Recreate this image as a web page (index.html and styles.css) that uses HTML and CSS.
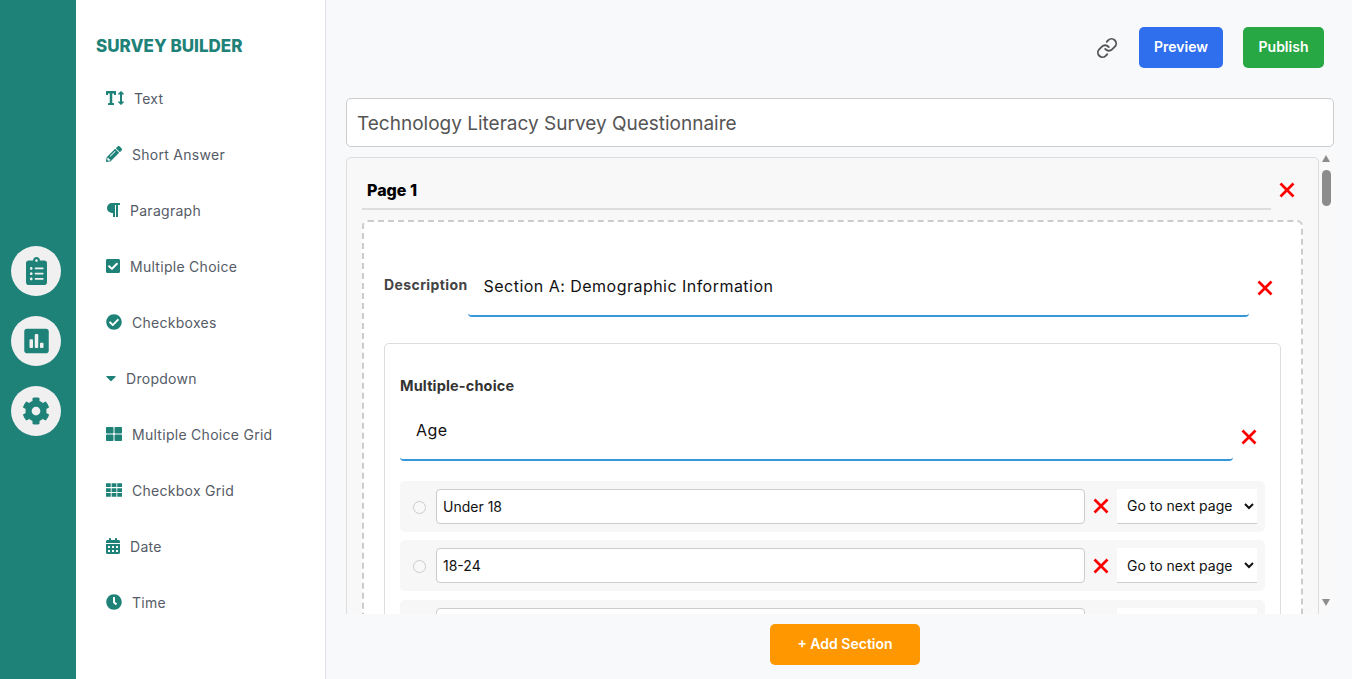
FILE: index.html
```html
<!DOCTYPE html>
<html lang="en">
<head>
<meta charset="utf-8">
<title>Survey Builder</title>
<link rel="stylesheet" href="styles.css">
</head>
<body>
<svg class="defs" width="0" height="0" aria-hidden="true"><symbol id="x" viewBox="0 0 16 16"><path d="M1.5 1.5l13 13M14.500 1.500l-13 13" fill="none" stroke="#f00" stroke-width="2.700"/></symbol></svg>
<nav class="rail">
  <a class="rail-btn"><svg width="21" height="28" viewBox="0 0 384 512"><path d="M336 64h-80c0-35.300-28.700-64-64-64s-64 28.700-64 64H48C21.500 64 0 85.500 0 112v352c0 26.500 21.500 48 48 48h288c26.500 0 48-21.500 48-48V112c0-26.500-21.500-48-48-48zM96 424c-13.300 0-24-10.700-24-24s10.700-24 24-24 24 10.700 24 24-10.700 24-24 24zm0-96c-13.300 0-24-10.700-24-24s10.700-24 24-24 24 10.700 24 24-10.700 24-24 24zm0-96c-13.300 0-24-10.700-24-24s10.700-24 24-24 24 10.700 24 24-10.700 24-24 24zm96-192c13.300 0 24 10.700 24 24s-10.700 24-24 24-24-10.700-24-24 10.700-24 24-24zm128 368c0 4.400-3.600 8-8 8H168c-4.400 0-8-3.600-8-8v-16c0-4.400 3.600-8 8-8h144c4.400 0 8 3.600 8 8v16zm0-96c0 4.400-3.600 8-8 8H168c-4.400 0-8-3.600-8-8v-16c0-4.400 3.600-8 8-8h144c4.400 0 8 3.600 8 8v16zm0-96c0 4.400-3.600 8-8 8H168c-4.400 0-8-3.600-8-8v-16c0-4.400 3.600-8 8-8h144c4.400 0 8 3.600 8 8v16z"/></svg></a>
  <a class="rail-btn"><svg width="25" height="28" viewBox="0 0 448 512"><path d="M400 32H48C21.500 32 0 53.500 0 80v352c0 26.500 21.500 48 48 48h352c26.500 0 48-21.500 48-48V80c0-26.500-21.500-48-48-48zM160 368c0 8.840-7.160 16-16 16h-32c-8.840 0-16-7.160-16-16V240c0-8.840 7.160-16 16-16h32c8.840 0 16 7.160 16 16v128zm96 0c0 8.840-7.160 16-16 16h-32c-8.840 0-16-7.160-16-16V144c0-8.840 7.160-16 16-16h32c8.840 0 16 7.160 16 16v224zm96 0c0 8.840-7.160 16-16 16h-32c-8.840 0-16-7.160-16-16v-64c0-8.840 7.160-16 16-16h32c8.840 0 16 7.160 16 16v64z"/></svg></a>
  <a class="rail-btn"><svg width="28" height="28" viewBox="0 0 512 512"><path d="M487.400 315.700l-42.600-24.600c4.300-23.200 4.300-47 0-70.200l42.600-24.600c4.900-2.800 7.100-8.600 5.500-14-11.100-35.600-30-67.800-54.700-94.600-3.800-4.100-10-5.100-14.800-2.300L380.800 110c-17.900-15.400-38.500-27.300-60.800-35.100V25.800c0-5.600-3.900-10.500-9.400-11.700-36.700-8.200-74.300-7.800-109.200 0-5.500 1.200-9.400 6.100-9.400 11.700V75c-22.200 7.900-42.800 19.800-60.800 35.100L88.700 85.500c-4.900-2.800-11-1.900-14.800 2.300-24.700 26.700-43.600 58.900-54.700 94.600-1.700 5.400.6 11.200 5.500 14L67.300 221c-4.300 23.200-4.300 47 0 70.200l-42.600 24.600c-4.900 2.800-7.100 8.600-5.500 14 11.100 35.600 30 67.800 54.700 94.600 3.800 4.100 10 5.100 14.800 2.300l42.600-24.600c17.900 15.400 38.500 27.300 60.800 35.100v49.200c0 5.600 3.900 10.500 9.400 11.700 36.700 8.200 74.300 7.800 109.200 0 5.500-1.200 9.400-6.100 9.400-11.700v-49.200c22.200-7.900 42.800-19.800 60.800-35.100l42.600 24.600c4.900 2.800 11 1.900 14.800-2.300 24.700-26.700 43.600-58.900 54.700-94.600 1.500-5.500-.7-11.300-5.600-14.100zM256 336c-44.100 0-80-35.900-80-80s35.900-80 80-80 80 35.900 80 80-35.900 80-80 80z"/></svg></a>
</nav>
<aside class="tools">
  <h1 class="tools-title">SURVEY BUILDER</h1>
  <ul class="tool-list">
    <li class="tool"><svg width="18" height="16" viewBox="0 0 576 512"><path d="M304 32H16A16 16 0 0 0 0 48v96a16 16 0 0 0 16 16h32a16 16 0 0 0 16-16v-32h56v304H80a16 16 0 0 0-16 16v32a16 16 0 0 0 16 16h160a16 16 0 0 0 16-16v-32a16 16 0 0 0-16-16h-40V112h56v32a16 16 0 0 0 16 16h32a16 16 0 0 0 16-16V48a16 16 0 0 0-16-16zm256 336h-48V144h48c14.310 0 21.330-17.310 11.310-27.310l-80-80a16 16 0 0 0-22.620 0l-80 80C379.360 126 384.360 144 400 144h48v224h-48c-14.290 0-21.310 17.310-11.310 27.310l80 80a16 16 0 0 0 22.620 0l80-80C580.640 386 575.640 368 560 368z"/></svg>Text</li>
    <li class="tool"><svg width="16" height="16" viewBox="0 0 512 512"><path d="M497.900 142.100l-46.100 46.100c-4.700 4.700-12.300 4.700-17 0l-111-111c-4.700-4.700-4.700-12.300 0-17l46.100-46.100c18.700-18.700 49.100-18.700 67.900 0l60.100 60.100c18.800 18.700 18.800 49.100 0 67.900zM284.200 99.800L21.600 362.400.4 483.900c-2.900 16.400 11.400 30.600 27.800 27.800l121.500-21.300 262.600-262.600c4.700-4.700 4.700-12.300 0-17l-111-111c-4.800-4.700-12.400-4.700-17.100 0zM124.100 339.900c-5.500-5.500-5.500-14.300 0-19.800l154-154c5.500-5.500 14.300-5.500 19.800 0s5.500 14.300 0 19.800l-154 154c-5.500 5.500-14.300 5.500-19.800 0zM88 424h48v36.300l-64.500 11.300-31.100-31.100L51.700 376H88v48z"/></svg>Short Answer</li>
    <li class="tool"><svg width="14" height="16" viewBox="0 0 448 512"><path d="M448 48v32a16 16 0 0 1-16 16h-48v368a16 16 0 0 1-16 16h-32a16 16 0 0 1-16-16V96h-32v368a16 16 0 0 1-16 16h-32a16 16 0 0 1-16-16V352h-32a160 160 0 0 1 0-320h240a16 16 0 0 1 16 16z"/></svg>Paragraph</li>
    <li class="tool"><svg width="14" height="16" viewBox="0 0 448 512"><path d="M400 480H48c-26.510 0-48-21.490-48-48V80c0-26.510 21.490-48 48-48h352c26.510 0 48 21.490 48 48v352c0 26.510-21.490 48-48 48zm-204.686-98.059l184-184c6.248-6.248 6.248-16.379 0-22.627l-22.627-22.627c-6.248-6.248-16.379-6.249-22.628 0L184 302.745l-69.059-69.059c-6.248-6.248-16.379-6.248-22.628 0L69.687 256.314c-6.248 6.248-6.248 16.379 0 22.627l92.686 92.686c6.249 6.249 16.379 6.249 22.628.001z"/></svg>Multiple Choice</li>
    <li class="tool"><svg width="16" height="16" viewBox="0 0 512 512"><path d="M504 256c0 136.967-111.033 248-248 248S8 392.967 8 256 119.033 8 256 8s248 111.033 248 248zM227.314 387.314l184-184c6.248-6.248 6.248-16.379 0-22.627l-22.627-22.627c-6.248-6.249-16.379-6.249-22.628 0L216 308.118l-70.059-70.059c-6.248-6.248-16.379-6.248-22.628 0l-22.627 22.627c-6.248 6.248-6.248 16.379 0 22.627l104 104c6.249 6.249 16.379 6.249 22.628.001z"/></svg>Checkboxes</li>
    <li class="tool"><svg width="10" height="16" viewBox="0 0 320 512"><path d="M31.300 192h257.300c17.800 0 26.700 21.500 14.100 34.100L174.100 354.800c-7.800 7.800-20.500 7.800-28.300 0L17.200 226.100C4.600 213.500 13.500 192 31.300 192z"/></svg>Dropdown</li>
    <li class="tool"><svg width="16" height="16" viewBox="0 0 512 512"><path d="M296 32h192c13.255 0 24 10.745 24 24v160c0 13.255-10.745 24-24 24H296c-13.255 0-24-10.745-24-24V56c0-13.255 10.745-24 24-24zm-80 0H24C10.745 32 0 42.745 0 56v160c0 13.255 10.745 24 24 24h192c13.255 0 24-10.745 24-24V56c0-13.255-10.745-24-24-24zM0 296v160c0 13.255 10.745 24 24 24h192c13.255 0 24-10.745 24-24V296c0-13.255-10.745-24-24-24H24c-13.255 0-24 10.745-24 24zm296 184h192c13.255 0 24-10.745 24-24V296c0-13.255-10.745-24-24-24H296c-13.255 0-24 10.745-24 24v160c0 13.255 10.745 24 24 24z"/></svg>Multiple Choice Grid</li>
    <li class="tool"><svg width="16" height="16" viewBox="0 0 512 512"><path d="M0 40h152v120H0zM180 40h152v120H180zM360 40h152v120H360zM0 196h152v120H0zM180 196h152v120H180zM360 196h152v120H360zM0 352h152v120H0zM180 352h152v120H180zM360 352h152v120H360z"/></svg>Checkbox Grid</li>
    <li class="tool"><svg width="14" height="16" viewBox="0 0 448 512"><path d="M0 464c0 26.500 21.500 48 48 48h352c26.500 0 48-21.500 48-48V192H0v272zm320-196c0-6.600 5.400-12 12-12h40c6.600 0 12 5.400 12 12v40c0 6.600-5.400 12-12 12h-40c-6.600 0-12-5.400-12-12v-40zm0 128c0-6.600 5.400-12 12-12h40c6.600 0 12 5.400 12 12v40c0 6.600-5.400 12-12 12h-40c-6.600 0-12-5.400-12-12v-40zM192 268c0-6.600 5.400-12 12-12h40c6.600 0 12 5.400 12 12v40c0 6.600-5.400 12-12 12h-40c-6.600 0-12-5.400-12-12v-40zm0 128c0-6.600 5.400-12 12-12h40c6.600 0 12 5.400 12 12v40c0 6.600-5.400 12-12 12h-40c-6.600 0-12-5.400-12-12v-40zM64 268c0-6.600 5.400-12 12-12h40c6.600 0 12 5.400 12 12v40c0 6.600-5.400 12-12 12H76c-6.600 0-12-5.400-12-12v-40zm0 128c0-6.600 5.400-12 12-12h40c6.600 0 12 5.400 12 12v40c0 6.600-5.400 12-12 12H76c-6.600 0-12-5.400-12-12v-40zM400 64h-48V16c0-8.800-7.200-16-16-16h-32c-8.800 0-16 7.200-16 16v48H160V16c0-8.800-7.200-16-16-16h-32c-8.800 0-16 7.200-16 16v48H48C21.500 64 0 85.500 0 112v48h448v-48c0-26.500-21.500-48-48-48z"/></svg>Date</li>
    <li class="tool"><svg width="16" height="16" viewBox="0 0 512 512"><path d="M256,8C119,8,8,119,8,256S119,504,256,504,504,393,504,256,393,8,256,8Zm92.490,313h0l-20,25a16,16,0,0,1-22.490,2.500h0l-67-49.720a40,40,0,0,1-15-31.230V112a16,16,0,0,1,16-16h32a16,16,0,0,1,16,16V256l58,42.500A16,16,0,0,1,348.490,321Z"/></svg>Time</li>
  </ul>
</aside>
<main class="main">
  <header class="topbar">
    <svg class="link-icon" width="22" height="22" viewBox="0 0 24 24"><path d="M10 13a5 5 0 0 0 7.540.54l3-3a5 5 0 0 0-7.070-7.070l-1.720 1.710M14 11a5 5 0 0 0-7.540-.54l-3 3a5 5 0 0 0 7.070 7.070l1.710-1.710"/></svg>
    <button class="btn btn-preview">Preview</button>
    <button class="btn btn-publish">Publish</button>
  </header>
  <input class="survey-title" value="Technology Literacy Survey Questionnaire">
  <div class="scroll">
    <section class="page">
      <div class="page-head">
        <h2 class="page-title">Page 1</h2>
        <svg class="x x-high" width="16" height="16"><use href="#x"/></svg>
      </div>
      <div class="section">
        <div class="desc-row">
          <label class="desc-label">Description</label>
          <input class="line-input" value="Section A: Demographic Information">
          <svg class="x x-low" width="16" height="16"><use href="#x"/></svg>
        </div>
        <div class="card">
          <div class="card-label">Multiple-choice</div>
          <div class="question-row">
            <input class="line-input" value="Age">
            <svg class="x x-lower" width="16" height="16"><use href="#x"/></svg>
          </div>
          <div class="option">
            <input class="radio" type="radio" name="age">
            <input class="option-input" value="Under 18">
            <svg class="x" width="16" height="16"><use href="#x"/></svg>
            <select class="goto"><option>Go to next page</option></select>
          </div>
          <div class="option">
            <input class="radio" type="radio" name="age">
            <input class="option-input" value="18-24">
            <svg class="x" width="16" height="16"><use href="#x"/></svg>
            <select class="goto"><option>Go to next page</option></select>
          </div>
          <div class="option">
            <input class="radio" type="radio" name="age">
            <input class="option-input" value="25-34">
            <svg class="x" width="16" height="16"><use href="#x"/></svg>
            <select class="goto"><option>Go to next page</option></select>
          </div>
        </div>
      </div>
    </section>
    <div class="scrollbar">
      <span class="arrow-up"></span>
      <span class="thumb"></span>
      <span class="arrow-down"></span>
    </div>
  </div>
  <footer class="footer"><button class="btn btn-add">+ Add Section</button></footer>
</main>
</body>
</html>
```

FILE: styles.css
```css
* { box-sizing: border-box; }
html, body { height: 100%; }
body {
  margin: 0;
  display: flex;
  overflow: hidden;
  background: #f8f9fb;
  font-family: Inter, "Open Sans", sans-serif;
  font-size: 14px;
}
.defs { position: absolute; }
input, select, button { font-family: inherit; }

/* rail */
.rail {
  flex: 0 0 76px;
  display: flex;
  flex-direction: column;
  align-items: center;
  gap: 20px;
  padding: 246px 4px 0 0;
  background: #1f8278;
}
.rail-btn {
  width: 50px;
  height: 50px;
  display: flex;
  align-items: center;
  justify-content: center;
  border-radius: 50%;
  background: #f0f0f0;
  fill: #1f8278;
}

/* tools */
.tools {
  flex: 0 0 250px;
  padding: 36px 0 0 20px;
  background: #fff;
  border-right: 1px solid #dfe1e6;
}
.tools-title {
  margin: 0 0 14px;
  font-size: 17px;
  line-height: 20px;
  font-weight: 800;
  color: #1f8278;
}
.tool-list { list-style: none; margin: 0; padding: 0 0 0 10px; }
.tool {
  height: 56px;
  display: flex;
  align-items: center;
  gap: 10px;
  color: #555b66;
  letter-spacing: .28px;
}
.tool svg { flex: none; fill: #1f8278; }

/* main */
.main {
  flex: 1;
  min-width: 0;
  display: flex;
  flex-direction: column;
  padding: 27px 18px 0 20px;
}
.topbar {
  display: flex;
  justify-content: flex-end;
  align-items: center;
  gap: 20px;
  padding-right: 10px;
  margin-bottom: 30px;
}
.link-icon { fill: none; stroke: #555; stroke-width: 2; stroke-linecap: round; stroke-linejoin: round; margin-right: 1px; }
.btn {
  height: 41px;
  padding: 0 0 2px;
  border: 0;
  border-radius: 5px;
  color: #fff;
  font-size: 14px;
  font-weight: 600;
}
.btn-preview { width: 84px; background: #2f6fed; }
.btn-publish { width: 81px; background: #28a745; }
.survey-title {
  flex: none;
  width: 100%;
  height: 49px;
  padding: 1px 10px 0;
  border: 1px solid #ccc;
  border-radius: 5px;
  background: #fff;
  color: #555;
  font-size: 19px;
}
.scroll {
  flex: 1;
  min-height: 0;
  display: flex;
  align-items: flex-start;
  overflow: hidden;
  padding-top: 10px;
}
.page {
  flex: 1;
  min-width: 0;
  padding: 15px;
  background: #f8f8f8;
  border: 1px solid #ddd;
  border-radius: 5px;
}
.page-head { display: flex; align-items: center; gap: 8px; padding-right: 8px; margin-bottom: 10px; }
.page-title {
  flex: 1;
  margin: 0;
  height: 37px;
  padding-left: 5px;
  border-bottom: 2px solid #ddd;
  font-size: 16px;
  line-height: 35px;
  font-weight: 800;
  color: #000;
}
.x { flex: none; }
.x-high { margin-bottom: 4px; }
.x-low { margin-top: 4px; }
.x-lower { margin-top: 14px; }
.section {
  padding: 33px 20px 20px;
  background: #fff;
  border: 2px dashed #ccc;
  border-radius: 6px;
}
.desc-row { display: flex; align-items: center; gap: 8px; padding-right: 8px; margin-bottom: 26px; }
.desc-label {
  flex: 0 0 83px;
  margin-right: -8px;
  margin-top: -3px;
  font-size: 14px;
  letter-spacing: .4px;
  font-weight: 700;
  color: #444;
}
.line-input {
  flex: 1;
  min-width: 0;
  height: 62px;
  padding: 1px 16px 0;
  border: 0;
  border-bottom: 2px solid #3498db;
  border-radius: 0 0 4px 4px;
  background: #fff;
  color: #111;
  font-size: 16px;
  letter-spacing: .47px;
}
.card {
  padding: 30px 15px 15px;
  border: 1px solid #ddd;
  border-radius: 5px;
  background: #fff;
}
.card-label {
  height: 25px;
  font-size: 14.500px;
  line-height: 23px;
  letter-spacing: .15px;
  font-weight: 700;
  color: #333;
}
.question-row { display: flex; align-items: center; gap: 8px; padding-right: 8px; margin-bottom: 19.750px; }
.option {
  height: 51px;
  display: flex;
  align-items: center;
  gap: 8px;
  padding: 0 8px 0 13px;
  margin-bottom: 8.500px;
  border-radius: 5px;
  background: #f7f7f7;
}
.radio {
  appearance: none;
  flex: none;
  width: 13px;
  height: 13px;
  margin: 2px 2px 0 0;
  border: 1px solid #ccc;
  border-radius: 50%;
  background: #f8f8f8;
}
.option-input {
  flex: 1;
  min-width: 0;
  height: 35px;
  padding: 0 6px;
  border: 1px solid #ccc;
  border-radius: 4px;
  background: #fff;
  color: #111;
  font-size: 14px;
}
.goto {
  flex: 0 0 140px;
  height: 35px;
  padding: 0 6px;
  border: 0;
  border-bottom: 1px solid #ccc;
  border-radius: 0;
  background: #fff;
  color: #111;
  font-size: 14px;
}

/* scrollbar */
.scrollbar {
  flex: 0 0 15px;
  align-self: stretch;
  margin-top: -4px;
  position: relative;
  background: #f9f9f9;
}
.arrow-up, .arrow-down {
  position: absolute;
  left: 3px;
  width: 0;
  height: 0;
  border-left: 4.500px solid transparent;
  border-right: 4.500px solid transparent;
}
.arrow-up { top: 2px; border-bottom: 7px solid #8c8c8c; }
.arrow-down { bottom: 8px; border-top: 7px solid #8c8c8c; }
.thumb {
  position: absolute;
  top: 17px;
  left: 3px;
  width: 9px;
  height: 36px;
  border-radius: 5px;
  background: #8c8c8c;
}

/* footer */
.footer {
  flex: 0 0 65px;
  display: flex;
  justify-content: center;
  padding: 10px 0 0 10px;
}
.btn-add { width: 150px; background: #ff9800; }
```
